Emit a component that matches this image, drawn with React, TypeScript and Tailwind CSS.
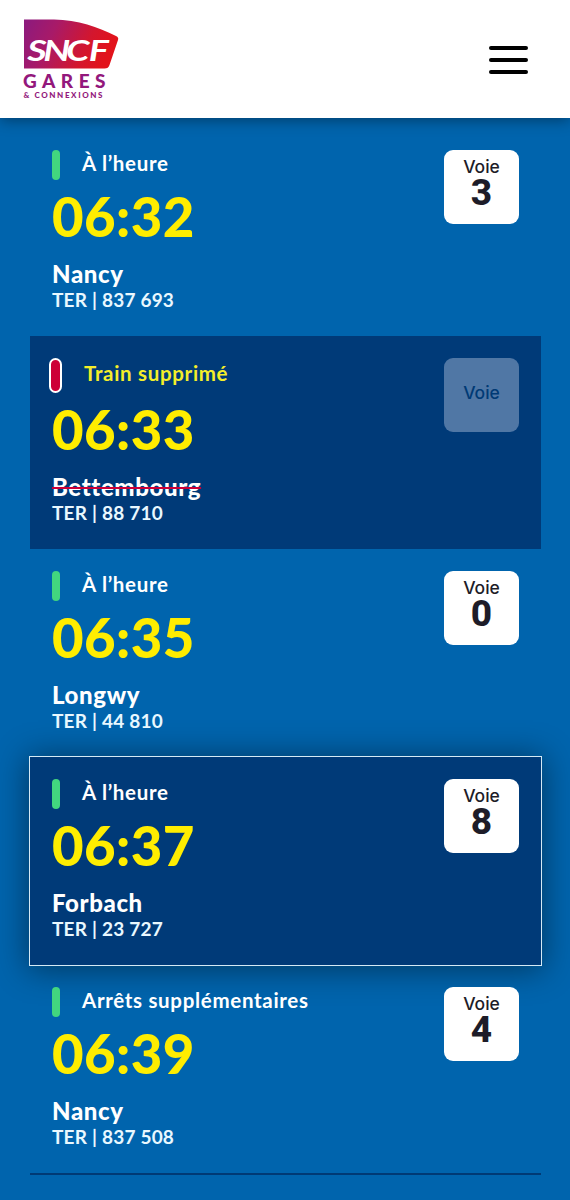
import React from "react"
import { clsx } from "clsx"

interface Departure {
  time: string
  destination: string
  train: string
  status: string
  platform?: string
  cancelled?: boolean
  highlighted?: boolean
}

const departures: Departure[] = [
  { time: "06:32", destination: "Nancy", train: "837 693", status: "À l’heure", platform: "3" },
  { time: "06:33", destination: "Bettembourg", train: "88 710", status: "Train supprimé", cancelled: true },
  { time: "06:35", destination: "Longwy", train: "44 810", status: "À l’heure", platform: "0" },
  { time: "06:37", destination: "Forbach", train: "23 727", status: "À l’heure", platform: "8", highlighted: true },
  { time: "06:39", destination: "Nancy", train: "837 508", status: "Arrêts supplémentaires", platform: "4" },
]

function Logo() {
  return (
    <svg width="98" height="82" viewBox="0 0 98 82" className="font-['Lato',sans-serif]">
      <defs>
        <linearGradient id="sncf" x1="0" y1="0" x2="1" y2="0.25">
          <stop offset="0" stopColor="#8b1a7f" />
          <stop offset="0.35" stopColor="#a81a68" />
          <stop offset="0.75" stopColor="#d3162e" />
          <stop offset="1" stopColor="#e2131b" />
        </linearGradient>
      </defs>
      <path d="M1 1.5 H31 C55 2 75 9 93 18 Q96 19.500 95 22 L86.500 47 Q85.500 50.500 81.500 50.500 H1 Z" fill="url(#sncf)" />
      <text x="3.200 15.500 33 50.500" y="43" transform="scale(1.3 1)" fontSize="29" fontWeight="700" fontStyle="italic" fill="#fff">SNCF</text>
      <text x="0" y="69.700" fontSize="19" fontWeight="900" fill="#93187c" textLength="82.500">GARES</text>
      <text x="0.500" y="80" fontSize="8" fontWeight="900" fill="#93187c" textLength="79">&amp; CONNEXIONS</text>
    </svg>
  )
}

function Header() {
  return (
    <header className="relative z-10 flex h-[118px] items-start justify-between bg-white pl-[23px] pr-[42px] pt-[18px] shadow-[0_2px_14px_rgba(0,0,0,0.4)]">
      <Logo />
      <button aria-label="Menu" className="mt-[28px] flex w-[39px] flex-col gap-2">
        <span className="h-1 rounded-full bg-black" />
        <span className="h-1 rounded-full bg-black" />
        <span className="h-1 rounded-full bg-black" />
      </button>
    </header>
  )
}

function Platform({ value }: { value?: string }) {
  return (
    <div
      className={clsx(
        "relative z-20 flex h-[74px] w-[75px] shrink-0 flex-col items-center rounded-[9px]",
        value ? "bg-white pt-[6px] text-[#1d1c28]" : "justify-center bg-[#5077a5] pb-[5px] text-[#003a75]"
      )}
    >
      <span className="font-['Inter',sans-serif] text-[17.5px] font-medium leading-[21px]">Voie</span>
      {value && <span className="font-['Roboto',sans-serif] text-[37px] font-extrabold leading-[32px]">{value}</span>}
    </div>
  )
}

function DepartureRow({ departure }: { departure: Departure }) {
  const { time, destination, train, status, platform, cancelled, highlighted } = departure

  return (
    <li
      className={clsx(
        "flex items-start justify-between px-[22px] pt-[22px] last:h-[210px] last:border-b-2 last:border-[#003a75]",
        cancelled ? "h-[213px] bg-[#003a78]" : "h-[208px]",
        highlighted && "relative z-10 bg-[#003a78] shadow-[0_0_0_1px_#d5eaf5,0_2px_30px_3px_rgba(0,0,0,0.42)]"
      )}
    >
      <div className="relative z-20">
        <div className="flex items-center">
          {cancelled ? (
            <span className="-ml-[3px] h-[35px] w-[13px] rounded-full border-[2.5px] border-white bg-[#cd0037]" />
          ) : (
            <span className="h-[30px] w-2 rounded-full bg-[#42d67f]" />
          )}
          <span
            className={clsx(
              "-mt-[5px] ml-[22px] text-[20.5px] font-bold leading-[24px] tracking-[0.68px]",
              cancelled ? "text-[#f4ee2a]" : "text-white"
            )}
          >
            {status}
          </span>
        </div>
        <div className="mt-[6px] text-[54.5px] font-black leading-[60px] tracking-[0.4px] text-[#ffed00]">{time}</div>
        <div className="mt-[13px] text-[24px] font-black leading-[29px] tracking-[0.6px] text-white">
          <span className={clsx(cancelled && "line-through decoration-[#cd0037] decoration-2")}>{destination}</span>
        </div>
        <div className="text-[19px] font-bold leading-[24px] tracking-[0.2px] text-[#e9f8ff]">TER | {train}</div>
      </div>
      <Platform value={platform} />
    </li>
  )
}

export default function App() {
  return (
    <div className="h-[1200px] w-[570px] overflow-hidden bg-[#0064ad] font-['Lato','Open_Sans',sans-serif]">
      <Header />
      <main className="px-[29px] pt-[10px]">
        <ul className="pl-px">
          {departures.map((departure) => (
            <DepartureRow key={departure.time} departure={departure} />
          ))}
        </ul>
      </main>
    </div>
  )
}
